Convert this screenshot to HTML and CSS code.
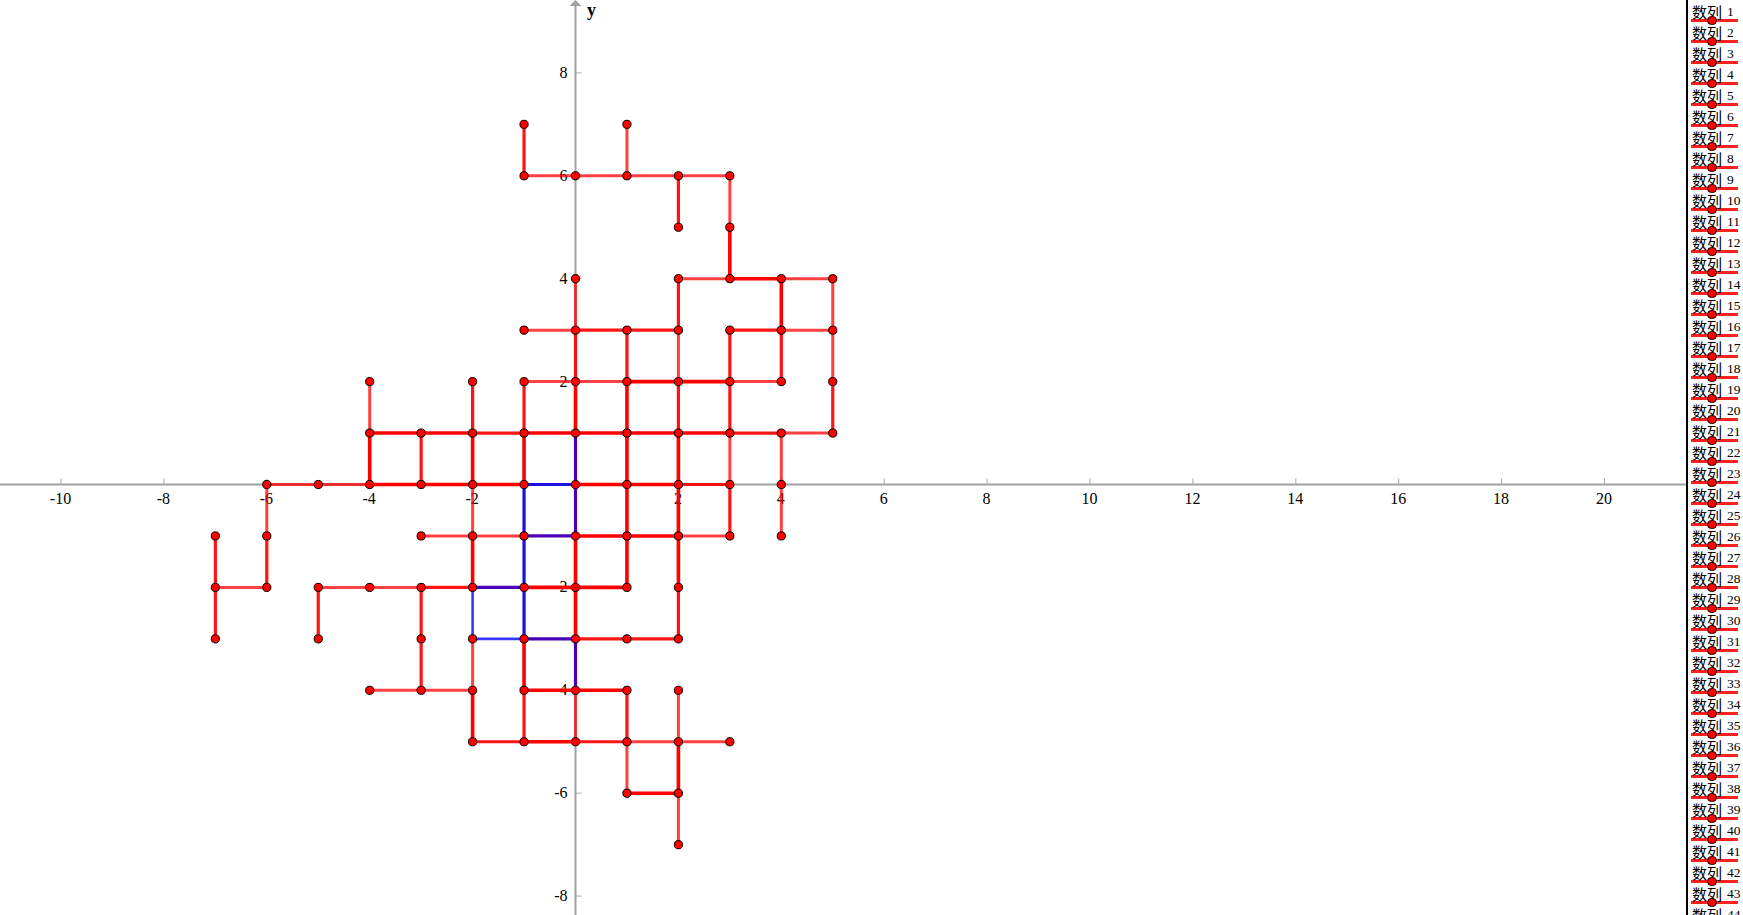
FILE: index.html
```html
<!DOCTYPE html>
<html>
  <head>
    <title>数列</title>
    <meta charset="utf-8">
    <link rel="stylesheet" href="styles.css">
  </head>
  <body>
    <div class="page">
      <svg id="board" class="board" width="1686" height="915">
        <line class="axis" x1="0" y1="484.5" x2="1686" y2="484.5"/>
        <line class="axis" x1="575.5" y1="4" x2="575.5" y2="915"/>
        <polygon class="arrow" points="575.5,0 569.5,6 581.5,6"/>
        <g id="ticks"></g>
        <text class="ylabel" x="587" y="16">y</text>
        <g id="labels"></g>
        <g id="edges"></g>
        <g id="dots"></g>
      </svg>
      <div class="panel">
        <div class="row"><span class="name">数列</span><span class="num">1</span><i class="knob"></i></div>
        <div class="row"><span class="name">数列</span><span class="num">2</span><i class="knob"></i></div>
        <div class="row"><span class="name">数列</span><span class="num">3</span><i class="knob"></i></div>
        <div class="row"><span class="name">数列</span><span class="num">4</span><i class="knob"></i></div>
        <div class="row"><span class="name">数列</span><span class="num">5</span><i class="knob"></i></div>
        <div class="row"><span class="name">数列</span><span class="num">6</span><i class="knob"></i></div>
        <div class="row"><span class="name">数列</span><span class="num">7</span><i class="knob"></i></div>
        <div class="row"><span class="name">数列</span><span class="num">8</span><i class="knob"></i></div>
        <div class="row"><span class="name">数列</span><span class="num">9</span><i class="knob"></i></div>
        <div class="row"><span class="name">数列</span><span class="num">10</span><i class="knob"></i></div>
        <div class="row"><span class="name">数列</span><span class="num">11</span><i class="knob"></i></div>
        <div class="row"><span class="name">数列</span><span class="num">12</span><i class="knob"></i></div>
        <div class="row"><span class="name">数列</span><span class="num">13</span><i class="knob"></i></div>
        <div class="row"><span class="name">数列</span><span class="num">14</span><i class="knob"></i></div>
        <div class="row"><span class="name">数列</span><span class="num">15</span><i class="knob"></i></div>
        <div class="row"><span class="name">数列</span><span class="num">16</span><i class="knob"></i></div>
        <div class="row"><span class="name">数列</span><span class="num">17</span><i class="knob"></i></div>
        <div class="row"><span class="name">数列</span><span class="num">18</span><i class="knob"></i></div>
        <div class="row"><span class="name">数列</span><span class="num">19</span><i class="knob"></i></div>
        <div class="row"><span class="name">数列</span><span class="num">20</span><i class="knob"></i></div>
        <div class="row"><span class="name">数列</span><span class="num">21</span><i class="knob"></i></div>
        <div class="row"><span class="name">数列</span><span class="num">22</span><i class="knob"></i></div>
        <div class="row"><span class="name">数列</span><span class="num">23</span><i class="knob"></i></div>
        <div class="row"><span class="name">数列</span><span class="num">24</span><i class="knob"></i></div>
        <div class="row"><span class="name">数列</span><span class="num">25</span><i class="knob"></i></div>
        <div class="row"><span class="name">数列</span><span class="num">26</span><i class="knob"></i></div>
        <div class="row"><span class="name">数列</span><span class="num">27</span><i class="knob"></i></div>
        <div class="row"><span class="name">数列</span><span class="num">28</span><i class="knob"></i></div>
        <div class="row"><span class="name">数列</span><span class="num">29</span><i class="knob"></i></div>
        <div class="row"><span class="name">数列</span><span class="num">30</span><i class="knob"></i></div>
        <div class="row"><span class="name">数列</span><span class="num">31</span><i class="knob"></i></div>
        <div class="row"><span class="name">数列</span><span class="num">32</span><i class="knob"></i></div>
        <div class="row"><span class="name">数列</span><span class="num">33</span><i class="knob"></i></div>
        <div class="row"><span class="name">数列</span><span class="num">34</span><i class="knob"></i></div>
        <div class="row"><span class="name">数列</span><span class="num">35</span><i class="knob"></i></div>
        <div class="row"><span class="name">数列</span><span class="num">36</span><i class="knob"></i></div>
        <div class="row"><span class="name">数列</span><span class="num">37</span><i class="knob"></i></div>
        <div class="row"><span class="name">数列</span><span class="num">38</span><i class="knob"></i></div>
        <div class="row"><span class="name">数列</span><span class="num">39</span><i class="knob"></i></div>
        <div class="row"><span class="name">数列</span><span class="num">40</span><i class="knob"></i></div>
        <div class="row"><span class="name">数列</span><span class="num">41</span><i class="knob"></i></div>
        <div class="row"><span class="name">数列</span><span class="num">42</span><i class="knob"></i></div>
        <div class="row"><span class="name">数列</span><span class="num">43</span><i class="knob"></i></div>
        <div class="row"><span class="name">数列</span><span class="num">44</span><i class="knob"></i></div>
      </div>
    </div>
    <script src="graph.js"></script>
  </body>
</html>
```

FILE: styles.css
```css
html, body
{
  margin: 0;
  height: 100%;
  overflow: hidden;
  background: #fff;
}
.page
{
  display: flex;
  height: 915px;
  overflow: hidden;
}
.board
{
  flex: none;
  display: block;
}
.axis
{
  stroke: #a0a0a6;
  stroke-width: 2;
}
.arrow
{
  fill: #a0a0a6;
}
.tick
{
  stroke: #a8a8ac;
  stroke-width: 1;
}
.label
{
  font-family: "Liberation Serif", serif;
  font-size: 16px;
  fill: #000;
}
.ylabel
{
  font-family: "Liberation Serif", serif;
  font-size: 18px;
  font-weight: bold;
  fill: #000;
}

/* edge weight: how many times the edge was walked */
.e1 { stroke: #ff0000; stroke-width: 3; stroke-opacity: 0.75; }
.e2 { stroke: #ff0000; stroke-width: 3.2; stroke-opacity: 0.92; }
.e3 { stroke: #ff0000; stroke-width: 3.6; }
.bt { stroke: #2020ff; stroke-width: 2.6; stroke-opacity: 0.9; }
.bm { stroke: #1a10e0; stroke-width: 3.2; }
.pu { stroke: #4a00b8; stroke-width: 3.2; }

.dot
{
  fill: #ff0000;
  stroke: #000;
  stroke-width: 1;
}

.panel
{
  flex: none;
  box-sizing: border-box;
  width: 57px;
  height: 915px;
  overflow: hidden;
  border-left: 2px solid #000;
  padding: 1px 5px 0 3px;
  background: #fff;
}
.row
{
  position: relative;
  display: flex;
  align-items: flex-end;
  box-sizing: border-box;
  height: 21px;
  padding-left: 1px;
  border-bottom: 3px solid #ff2020;
  line-height: 15px;
  white-space: nowrap;
}
.name
{
  font-family: "Noto Sans CJK SC", serif;
  font-size: 15px;
  color: #000;
}
.num
{
  margin-left: 5px;
  font-family: "Liberation Serif", serif;
  font-size: 13.5px;
  color: #000;
}
.knob
{
  position: absolute;
  left: 16px;
  bottom: -6.25px;
  box-sizing: border-box;
  width: 9.5px;
  height: 9.5px;
  border-radius: 50%;
  background: #ff0000;
  border: 1px solid #000;
}
```

FILE: graph.js
```js
var OX = 575.5, OY = 484.5, UNIT = 51.45;
var NS = "http://www.w3.org/2000/svg";

function px(x) { return OX + x * UNIT; }
function py(y) { return OY - y * UNIT; }

function add(parent, tag, cls, attrs, txt)
{
  var el = document.createElementNS(NS, tag);
  el.setAttribute("class", cls);
  for (var k in attrs) el.setAttribute(k, attrs[k]);
  if (txt !== undefined) el.textContent = txt;
  document.getElementById(parent).appendChild(el);
}

// ticks and numbers
for (var i = -10; i <= 20; i += 2)
{
  if (i == 0) continue;
  add("ticks", "line", "tick", {x1: px(i), y1: OY - 6, x2: px(i), y2: OY});
  add("labels", "text", "label", {x: px(i) - 0.5, y: OY + 19, "text-anchor": "middle"}, i);
}
for (var j = -8; j <= 8; j += 2)
{
  if (j == 0) continue;
  add("ticks", "line", "tick", {x1: OX, y1: py(j), x2: OX + 6, y2: py(j)});
  add("labels", "text", "label", {x: OX - 8, y: py(j) + 5, "text-anchor": "end"}, j);
}

// [class, x1, y1, x2, y2]
var edges = [
  // row y=6, 4, 3, 2
  ["e1",-1,6,0,6],["e1",0,6,1,6],["e1",1,6,2,6],["e1",2,6,3,6],
  ["e1",2,4,3,4],["e3",3,4,4,4],["e1",4,4,5,4],
  ["e1",-1,3,0,3],["e2",0,3,1,3],["e2",1,3,2,3],["e2",3,3,4,3],["e1",4,3,5,3],
  ["e1",-1,2,0,2],["e1",0,2,1,2],["e3",1,2,2,2],["e3",2,2,3,2],["e1",3,2,4,2],
  // row y=1
  ["e3",-4,1,-3,1],["e3",-3,1,-2,1],["e2",-2,1,-1,1],["e3",-1,1,0,1],["e3",0,1,1,1],
  ["e3",1,1,2,1],["e3",2,1,3,1],["e2",3,1,4,1],["e1",4,1,5,1],
  // row y=0
  ["e1",-6,0,-5,0],["e1",-5,0,-4,0],["e3",-4,0,-3,0],["e3",-3,0,-2,0],["e3",-2,0,-1,0],
  ["e3",0,0,1,0],["e3",1,0,2,0],["e2",2,0,3,0],
  // row y=-1
  ["e1",-3,-1,-2,-1],["e1",-2,-1,-1,-1],["e3",0,-1,1,-1],["e3",1,-1,2,-1],["e1",2,-1,3,-1],
  // row y=-2
  ["e1",-7,-2,-6,-2],["e1",-5,-2,-4,-2],["e1",-4,-2,-3,-2],["e2",-3,-2,-2,-2],
  ["e3",-1,-2,0,-2],["e3",0,-2,1,-2],
  // row y=-3
  ["e2",0,-3,1,-3],["e2",1,-3,2,-3],
  // row y=-4
  ["e1",-4,-4,-3,-4],["e1",-3,-4,-2,-4],["e3",-1,-4,0,-4],["e3",0,-4,1,-4],
  // row y=-5, -6
  ["e2",-2,-5,-1,-5],["e3",-1,-5,0,-5],["e2",0,-5,1,-5],["e1",1,-5,2,-5],["e1",2,-5,3,-5],
  ["e3",1,-6,2,-6],

  // columns left to right
  ["e2",-7,-1,-7,-2],["e2",-7,-2,-7,-3],
  ["e1",-6,0,-6,-1],["e2",-6,-1,-6,-2],
  ["e2",-5,-2,-5,-3],
  ["e1",-4,2,-4,1],["e3",-4,1,-4,0],
  ["e2",-3,1,-3,0],["e2",-3,-2,-3,-3],["e2",-3,-3,-3,-4],
  ["e2",-2,2,-2,1],["e3",-2,1,-2,0],["e1",-2,0,-2,-1],["e3",-2,-1,-2,-2],
  ["e1",-2,-3,-2,-4],["e3",-2,-4,-2,-5],
  ["e2",-1,7,-1,6],["e2",-1,2,-1,1],["e3",-1,1,-1,0],["e3",-1,-3,-1,-4],["e2",-1,-4,-1,-5],
  ["e1",0,4,0,3],["e2",0,3,0,2],["e3",0,2,0,1],["e3",0,-1,0,-2],["e3",0,-2,0,-3],["e1",0,-4,0,-5],
  ["e1",1,7,1,6],["e2",1,3,1,2],["e3",1,2,1,1],["e3",1,1,1,0],["e3",1,0,1,-1],["e3",1,-1,1,-2],
  ["e2",1,-4,1,-5],["e1",1,-5,1,-6],
  ["e2",2,6,2,5],["e2",2,4,2,3],["e1",2,3,2,2],["e2",2,2,2,1],["e3",2,1,2,0],["e3",2,0,2,-1],
  ["e3",2,-1,2,-2],["e2",2,-2,2,-3],["e1",2,-4,2,-5],["e3",2,-5,2,-6],["e1",2,-6,2,-7],
  ["e1",3,6,3,5],["e3",3,5,3,4],["e2",3,3,3,2],["e2",3,2,3,1],["e1",3,1,3,0],["e2",3,0,3,-1],
  ["e3",4,4,4,3],["e2",4,3,4,2],["e1",4,1,4,0],["e1",4,0,4,-1],
  ["e1",5,4,5,3],["e1",5,3,5,2],["e2",5,2,5,1],

  // the blue walk
  ["bt",-2,-2,-2,-3],["bt",-2,-3,-1,-3],
  ["bm",-1,0,0,0],["bm",-1,0,-1,-1],["bm",-1,-1,-1,-2],["bm",-1,-2,-1,-3],
  ["pu",0,1,0,0],["pu",0,0,0,-1],["pu",-1,-1,0,-1],["pu",-2,-2,-1,-2],["pu",-1,-3,0,-3],["pu",0,-3,0,-4]
];

var seen = {};
edges.forEach(function(e)
{
  add("edges", "line", e[0], {x1: px(e[1]), y1: py(e[2]), x2: px(e[3]), y2: py(e[4])});
  seen[e[1] + "," + e[2]] = [e[1], e[2]];
  seen[e[3] + "," + e[4]] = [e[3], e[4]];
});
for (var key in seen)
{
  add("dots", "circle", "dot", {cx: px(seen[key][0]), cy: py(seen[key][1]), r: 4.1});
}
```
